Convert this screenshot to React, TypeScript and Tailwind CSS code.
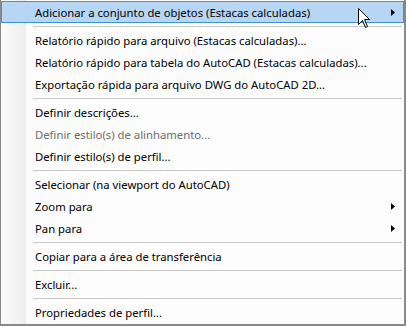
import React from "react";

type Item =
  | { kind: "item"; label: string; sub?: boolean; disabled?: boolean; active?: boolean }
  | { kind: "sep" };

const items: Item[] = [
  { kind: "item", label: "Adicionar a conjunto de objetos (Estacas calculadas)", sub: true, active: true },
  { kind: "sep" },
  { kind: "item", label: "Relatório rápido para arquivo (Estacas calculadas)..." },
  { kind: "item", label: "Relatório rápido para tabela do AutoCAD (Estacas calculadas)..." },
  { kind: "item", label: "Exportação rápida para arquivo DWG do AutoCAD 2D..." },
  { kind: "sep" },
  { kind: "item", label: "Definir descrições..." },
  { kind: "item", label: "Definir estilo(s) de alinhamento...", disabled: true },
  { kind: "item", label: "Definir estilo(s) de perfil..." },
  { kind: "sep" },
  { kind: "item", label: "Selecionar (na viewport do AutoCAD)" },
  { kind: "item", label: "Zoom para", sub: true },
  { kind: "item", label: "Pan para", sub: true },
  { kind: "sep" },
  { kind: "item", label: "Copiar para a área de transferência" },
  { kind: "sep" },
  { kind: "item", label: "Excluir..." },
  { kind: "sep" },
  { kind: "item", label: "Propriedades de perfil..." },
];

const Arrow = () => (
  <svg width="4" height="7" viewBox="0 0 4 7" className="shrink-0">
    <path d="M0 0 L4 3.5 L0 7 Z" fill="#000" />
  </svg>
);

// mouse pointer hovering the first item
const Cursor = () => (
  <svg
    width="13"
    height="21"
    viewBox="0 0 13 21"
    className="absolute left-[357px] top-[8px]"
  >
    <path
      d="M0.5 0.5 L0.5 16.5 L4.5 12.5 L7.5 19.5 L9.5 18.5 L6.5 11.5 L11.5 11.5 Z"
      fill="#fff"
      stroke="#000"
      strokeWidth="1"
      strokeLinejoin="miter"
    />
  </svg>
);

export default function App() {
  return (
    <div className="w-[406px] h-[326px] bg-white overflow-hidden">
      <div
        className="relative w-full h-full bg-[#fcfcfc] border-l border-r-2 border-b-2 border-[#8a8a8a] pt-px flex flex-col"
        style={{ fontFamily: '"Segoe UI", "Noto Sans", sans-serif' }}
      >
        {/* gutter */}
        <div className="absolute left-0 top-0 bottom-0 w-[25px] bg-gradient-to-r from-[#fbfbfb] to-[#eeeeee]" />
        {items.map((it, i) =>
          it.kind === "sep" ? (
            <div key={i} className="relative h-[6px] flex items-center pl-[32px] pr-[2px]">
              <div className="h-px w-full bg-[#c8c8c8]" />
            </div>
          ) : (
            <div
              key={i}
              className={`relative h-[22px] flex items-center text-[11.3px] ${
                it.active
                  ? "bg-[#b7d6f4] border border-[#3f8fe6] pl-[33px] pr-[8px]"
                  : "pl-[34px] pr-[9px]"
              } ${it.disabled ? "text-[#6d6d6d]" : "text-black"}`}
            >
              <span className="flex-1 whitespace-nowrap leading-none pt-px">{it.label}</span>
              {it.sub && <Arrow />}
            </div>
          )
        )}
        <Cursor />
      </div>
    </div>
  );
}
